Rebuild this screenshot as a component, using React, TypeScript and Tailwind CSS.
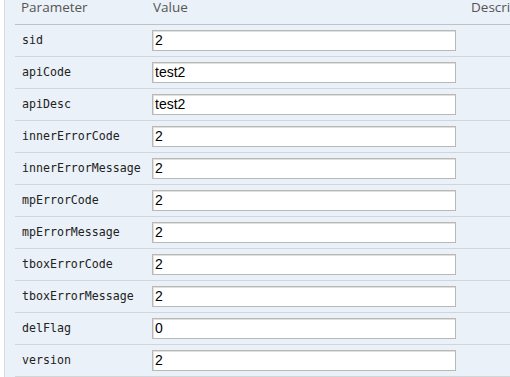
import React from "react";

const rows: [string, string][] = [
  ["sid", "2"],
  ["apiCode", "test2"],
  ["apiDesc", "test2"],
  ["innerErrorCode", "2"],
  ["innerErrorMessage", "2"],
  ["mpErrorCode", "2"],
  ["mpErrorMessage", "2"],
  ["tboxErrorCode", "2"],
  ["tboxErrorMessage", "2"],
  ["delFlag", "0"],
  ["version", "2"],
];

export default function App() {
  return (
    <div className="w-[510px] h-[377px] bg-white overflow-hidden flex">
      <div className="w-[4px] shrink-0 bg-white" />
      <div className="flex-1 min-w-0 border-l border-[#d6dde5] bg-[#eaf1f8] pl-[10px] flex flex-col">
        <div
          className="h-[25px] shrink-0 flex items-start border-b border-[#bfc3c7] text-[13.5px] leading-[15px] text-[#555]"
          style={{ fontFamily: '"Open Sans", "Noto Sans", sans-serif' }}
        >
          <div className="w-[137px] pl-[6px] shrink-0">Parameter</div>
          <div className="w-[318px] pl-[1px] shrink-0">Value</div>
          <div className="pl-[1px] whitespace-nowrap">Description</div>
        </div>
        {rows.map(([name, value]) => (
          <div
            key={name}
            className="h-[32px] shrink-0 flex items-center border-b border-[#d3d6d9]"
          >
            <div
              className="w-[137px] pl-[7px] shrink-0 text-[11.6px] text-[#222]"
              style={{ fontFamily: '"DejaVu Sans Mono", "Liberation Mono", monospace' }}
            >
              {name}
            </div>
            <div
              className="w-[304px] h-[21px] shrink-0 bg-white border border-[#b8b8b8] shadow-[inset_1px_1px_0_#e0e0e0] pl-[2px] flex items-center text-[14px] text-black"
              style={{ fontFamily: '"Liberation Sans", Arial, sans-serif' }}
            >
              {value}
            </div>
          </div>
        ))}
      </div>
    </div>
  );
}
